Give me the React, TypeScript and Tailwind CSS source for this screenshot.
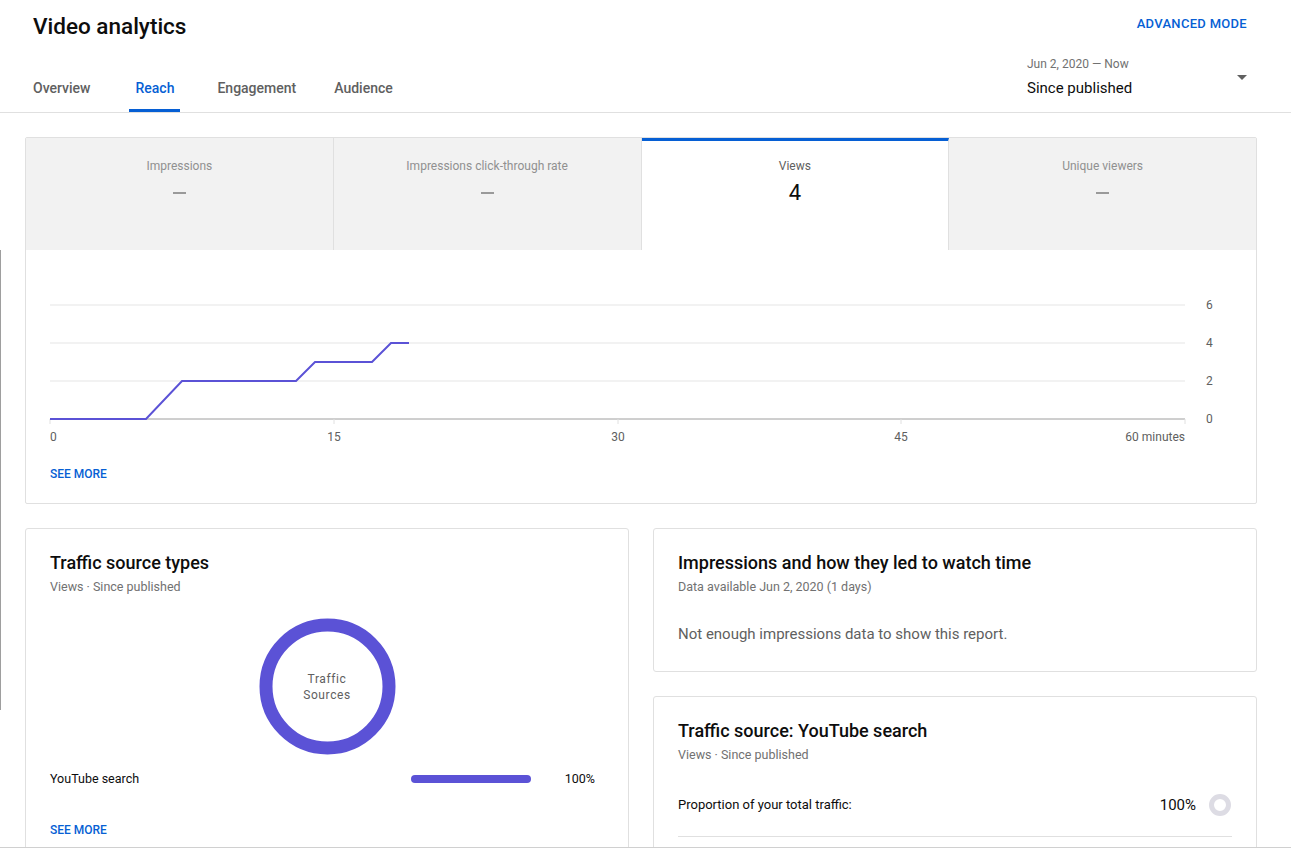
import React from "react";

const PURPLE = "#5b52d6";

function Metric({ label, value, selected, last }: { label: string; value?: string; selected?: boolean; last?: boolean }) {
  return (
    <div
      className={`flex-1 flex flex-col items-center ${selected ? "bg-white border-t-[3px] border-t-[#065fd4] pt-[17px]" : "bg-[#f2f2f2] pt-[20px]"} ${last ? "" : "border-r border-r-[#e0e0e0]"}`}
    >
      <div className={`text-[12px] leading-[16px] ${selected ? "text-[#606060]" : "text-[#909090]"}`}>{label}</div>
      <div className="mt-[5px] h-[28px] flex items-center justify-center">
        {value ? (
          <span className="text-[22px] leading-[28px] text-[#0d0d0d]">{value}</span>
        ) : (
          <div className="w-[13px] h-[2px] bg-[#9a9a9a]" />
        )}
      </div>
    </div>
  );
}

function Chart() {
  const grid = [14, 52, 90];
  const pts = "24,128 120,128 156,90 270,90 289,71 346,71 365,52 383,52";
  return (
    <svg width="1230" height="160" className="block" style={{ fontFamily: "Roboto, sans-serif" }}>
      {grid.map((y) => (
        <line key={y} x1={24} x2={1159} y1={y} y2={y} stroke="#eeeeee" strokeWidth={1.5} />
      ))}
      <line x1={24} x2={1159} y1={128} y2={128} stroke="#9e9e9e" strokeWidth={1} />
      {[24, 308, 592, 875, 1159].map((x) => (
        <line key={x} x1={x} x2={x} y1={128} y2={133} stroke="#e0e0e0" strokeWidth={1} />
      ))}
      <polyline points={pts} fill="none" stroke={PURPLE} strokeWidth={2} />
      {[
        ["6", 14],
        ["4", 52],
        ["2", 90],
        ["0", 128],
      ].map(([t, y]) => (
        <text key={t as string} x={1180} y={(y as number) + 4} fontSize={12} fill="#606060">
          {t}
        </text>
      ))}
      <text x={24} y={150} fontSize={12} fill="#606060">0</text>
      <text x={308} y={150} fontSize={12} fill="#606060" textAnchor="middle">15</text>
      <text x={592} y={150} fontSize={12} fill="#606060" textAnchor="middle">30</text>
      <text x={875} y={150} fontSize={12} fill="#606060" textAnchor="middle">45</text>
      <text x={1159} y={150} fontSize={12} fill="#606060" textAnchor="end">60 minutes</text>
    </svg>
  );
}

function CardTitle({ title, sub }: { title: string; sub: string }) {
  return (
    <>
      <div className="text-[18px] leading-[24px] font-medium text-[#0d0d0d]">{title}</div>
      <div className="mt-[4px] text-[12.5px] leading-[16px] text-[#717171]">{sub}</div>
    </>
  );
}

const TABS: { t: string; ml: string }[] = [
  { t: "Overview", ml: "ml-0" },
  { t: "Reach", ml: "ml-[33px]" },
  { t: "Engagement", ml: "ml-[31px]" },
  { t: "Audience", ml: "ml-[26px]" },
];

export default function App() {
  return (
    <div
      className="relative h-[848px] overflow-hidden bg-white border-b border-[#d0d0d0]"
      style={{ fontFamily: "Roboto, 'Noto Sans', sans-serif" }}
    >
      <div className="absolute left-0 top-[250px] h-[460px] w-[1px] bg-[#9e9e9e]" />

      {/* Header */}
      <div className="border-b border-[#e0e0e0] pl-[33px] pr-[44px]">
        <div className="flex justify-between items-start h-[50px]">
          <h1 className="mt-[12px] text-[22.5px] leading-[28px] font-medium text-[#0d0d0d]">Video analytics</h1>
          <div className="mt-[16px] text-[13px] leading-[15px] font-medium tracking-[0.3px] text-[#065fd4]">ADVANCED MODE</div>
        </div>
        <div className="flex justify-between items-end h-[62px]">
          <div className="flex items-end -ml-[6px]">
            {TABS.map(({ t, ml }) => (
              <div
                key={t}
                className={`${ml} h-[48px] pt-[4px] px-[6px] flex items-center text-[14px] font-medium border-b-[3px] ${
                  t === "Reach" ? "text-[#065fd4] border-[#065fd4]" : "text-[#606060] border-transparent"
                }`}
              >
                {t}
              </div>
            ))}
          </div>
          <div className="w-[220px] h-[62px] flex items-start justify-between">
            <div className="flex flex-col">
              <span className="text-[12px] leading-[16px] text-[#717171] mt-[6px]">Jun 2, 2020 — Now</span>
              <span className="text-[15px] leading-[20px] text-[#0d0d0d] mt-[6px]">Since published</span>
            </div>
            <div className="mt-[25px] w-0 h-0 border-l-[5px] border-r-[5px] border-t-[5px] border-l-transparent border-r-transparent border-t-[#606060]" />
          </div>
        </div>
      </div>

      {/* Content */}
      <div className="pl-[25px] pt-[24px] w-[1257px]">
        <div className="border border-[#e0e0e0] rounded-[2px]">
          <div className="flex h-[112px]">
            <Metric label="Impressions" />
            <Metric label="Impressions click-through rate" />
            <Metric label="Views" value="4" selected />
            <Metric label="Unique viewers" last />
          </div>
          <div className="pt-[41px]">
            <Chart />
            <div className="pl-[24px] mt-[15px] pb-[21px] text-[12px] leading-[16px] font-medium text-[#065fd4]">SEE MORE</div>
          </div>
        </div>

        <div className="mt-[24px] grid grid-cols-2 gap-[24px]">
          <div className="border border-[#e0e0e0] rounded-[3px] px-[24px] pt-[22px] h-[340px]">
            <CardTitle title="Traffic source types" sub="Views · Since published" />
            <div className="mt-[23px] flex justify-center">
              <div className="relative w-[137px] h-[137px]">
                <svg width="137" height="137" className="absolute inset-0">
                  <circle cx="68.5" cy="68.5" r="61.5" fill="none" stroke={PURPLE} strokeWidth="13" />
                </svg>
                <div className="absolute inset-0 flex flex-col items-center justify-center text-[12px] leading-[16px] text-[#606060] tracking-[0.6px]">
                  <span>Traffic</span>
                  <span>Sources</span>
                </div>
              </div>
            </div>
            <div className="mt-[16px] pr-[9px] flex items-center h-[16px]">
              <span className="text-[12.5px] text-[#0d0d0d]">YouTube search</span>
              <div className="ml-auto w-[120px] h-[8px] rounded-full" style={{ background: PURPLE }} />
              <span className="w-[64px] text-right text-[12.5px] text-[#0d0d0d]">100%</span>
            </div>
            <div className="mt-[35px] text-[12px] leading-[16px] font-medium text-[#065fd4]">SEE MORE</div>
          </div>

          <div className="flex flex-col gap-[24px]">
            <div className="border border-[#e0e0e0] rounded-[3px] px-[24px] pt-[22px] pb-[27px]">
              <CardTitle title="Impressions and how they led to watch time" sub="Data available Jun 2, 2020 (1 days)" />
              <div className="mt-[29px] text-[15px] leading-[20px] text-[#606060]">Not enough impressions data to show this report.</div>
            </div>
            <div className="border border-[#e0e0e0] rounded-[3px] px-[24px] pt-[22px] h-[200px]">
              <CardTitle title="Traffic source: YouTube search" sub="Views · Since published" />
              <div className="mt-[30px] flex items-center h-[24px]">
                <span className="text-[13px] text-[#0d0d0d]">Proportion of your total traffic:</span>
                <span className="ml-auto text-[15px] text-[#0d0d0d]">100%</span>
                <svg width="24" height="24" className="ml-[12px]">
                  <circle cx="12" cy="12" r="8.5" fill="none" stroke="#dddce4" strokeWidth="5" />
                </svg>
              </div>
              <div className="mt-[19px] h-px bg-[#e0e0e0]" />
            </div>
          </div>
        </div>
      </div>
    </div>
  );
}
